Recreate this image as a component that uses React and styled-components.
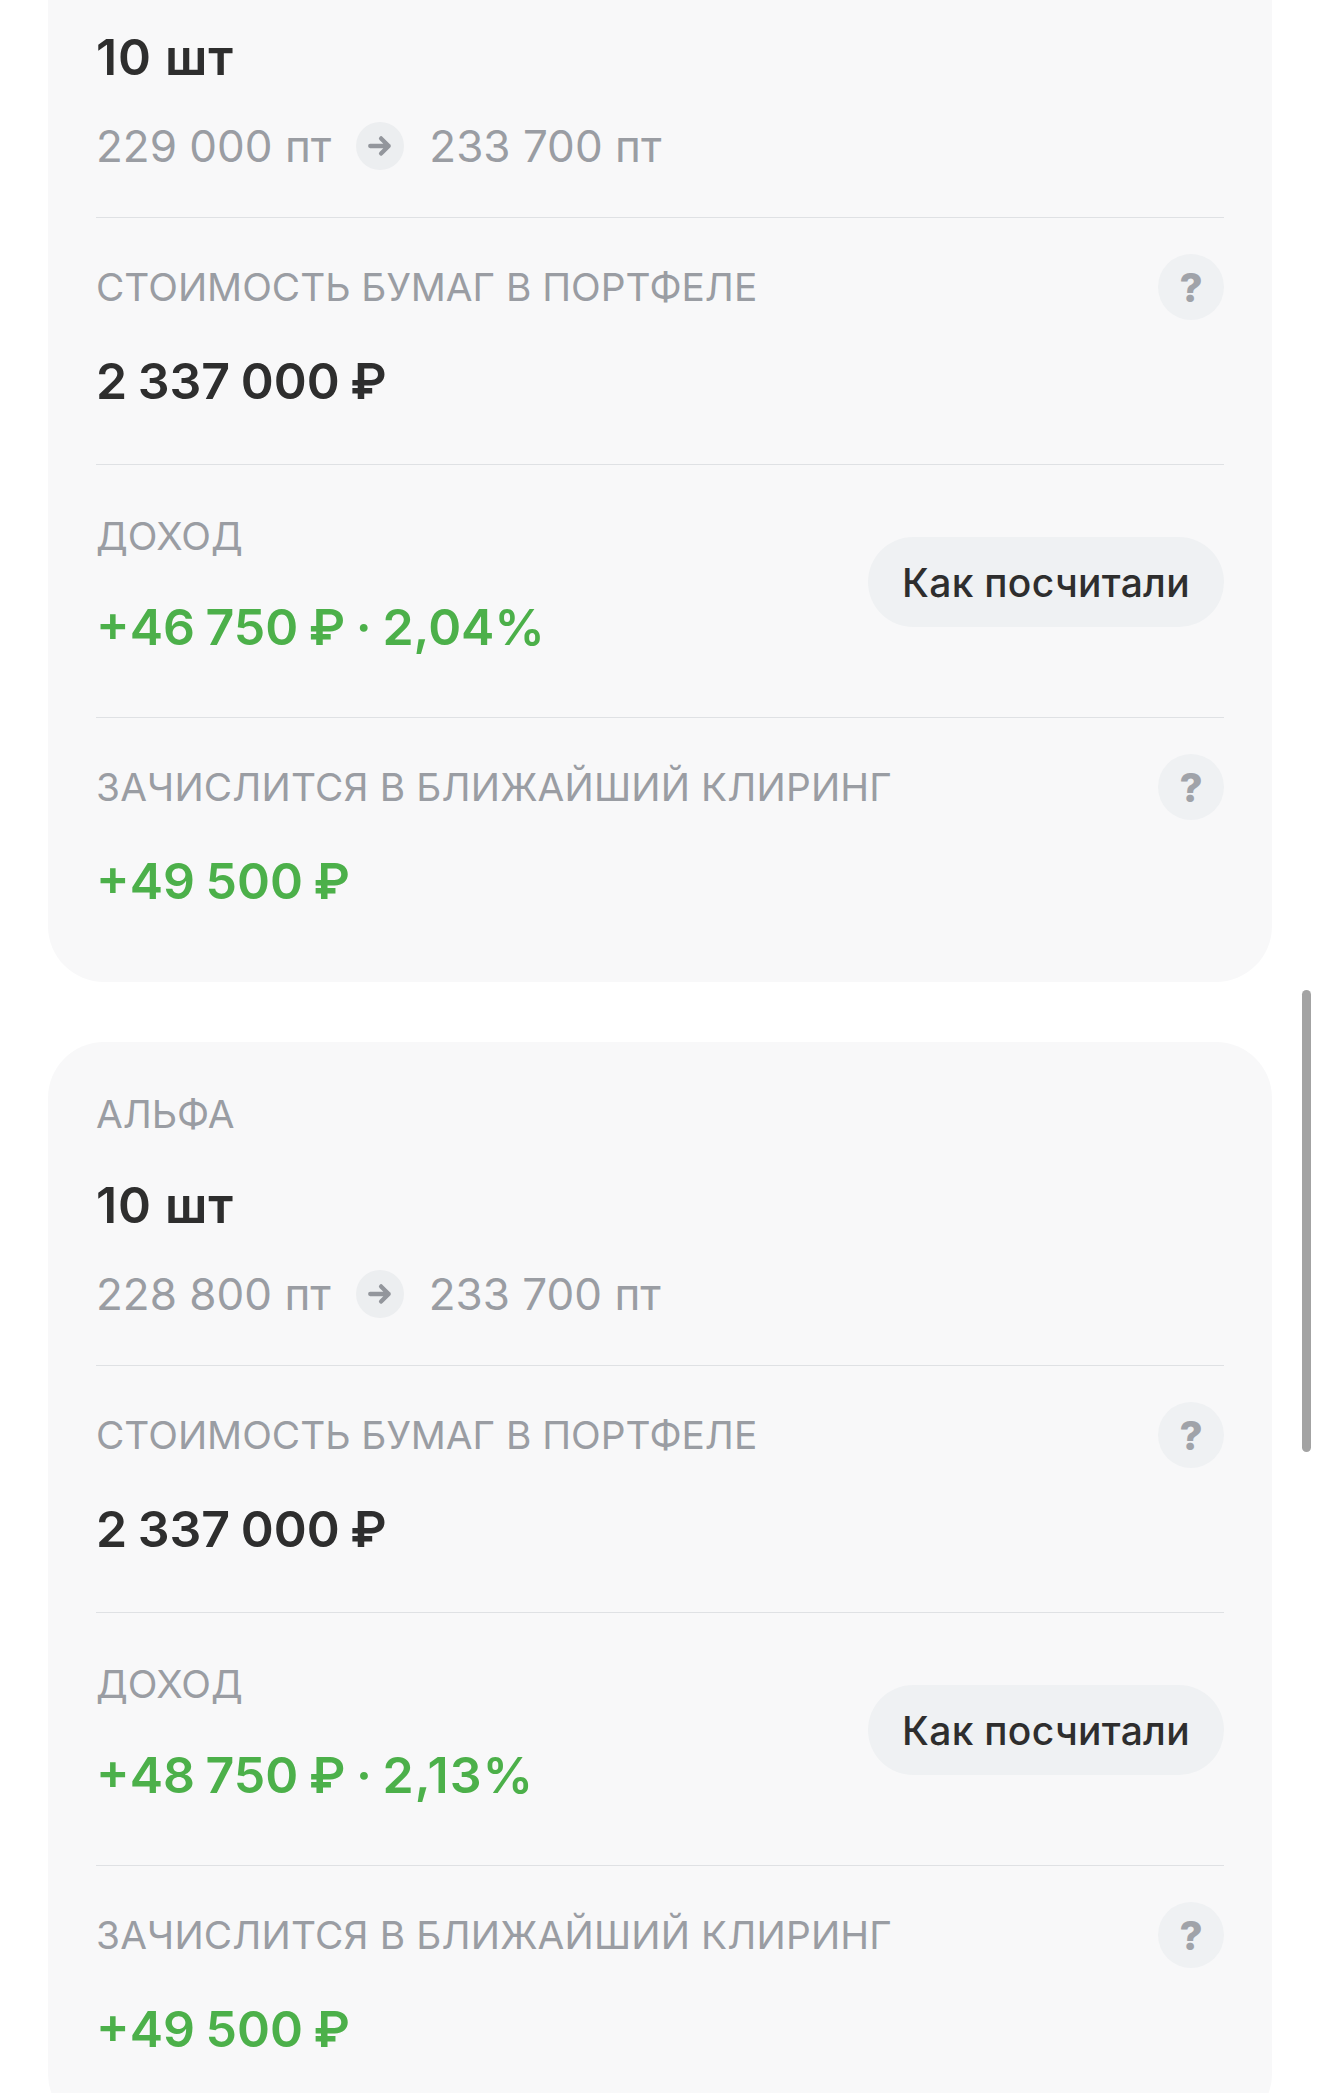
import React from "react";
import styled, { createGlobalStyle } from "styled-components";

const GlobalStyle = createGlobalStyle`
  html, body {
    margin: 0;
    height: 2093px;
    overflow: hidden;
    background: #ffffff;
  }
  body {
    font-family: Inter, "Noto Sans", "Liberation Sans", sans-serif;
  }
`;

const Page = styled.div`
  position: relative;
  height: 2093px;
  overflow: hidden;
`;

const List = styled.div`
  display: flex;
  flex-direction: column;
  gap: 60px;
  margin-top: -106px;
  padding: 0 48px;
`;

const Card = styled.section`
  background: #f8f8f9;
  border-radius: 56px;
  padding: 0 48px;
`;

const Section = styled.div`
  padding: ${({ $top }) => $top}px 0 ${({ $bottom }) => $bottom}px;
  border-bottom: ${({ $last }) => ($last ? "none" : "1px solid #dfe1e4")};
`;

const Eyebrow = styled.div`
  font-size: 38.8px;
  line-height: 48px;
  font-weight: 400;
  color: #9a9da3;
`;

const Count = styled.div`
  margin-top: 37px;
  font-size: 50px;
  line-height: 60px;
  font-weight: 600;
  letter-spacing: 0.8px;
  color: #2e2e2e;
`;

const PriceRow = styled.div`
  display: flex;
  align-items: center;
  gap: 25px;
  margin-top: 35px;
  height: 48px;
  font-size: 44px;
  line-height: 48px;
  font-weight: 400;
  color: #9a9da3;
`;

const ArrowBadge = styled.span`
  display: flex;
  align-items: center;
  justify-content: center;
  width: 48px;
  height: 48px;
  border-radius: 50%;
  background: #eceef0;
`;

const Header = styled.div`
  display: flex;
  align-items: center;
  justify-content: space-between;
  height: 66px;
`;

const Label = styled.div`
  font-size: 38.8px;
  line-height: 48px;
  font-weight: 400;
  letter-spacing: ${({ $tracking }) => $tracking || 0}px;
  color: #9a9da3;
`;

const HelpButton = styled.span`
  display: flex;
  align-items: center;
  justify-content: center;
  width: 66px;
  height: 66px;
  border-radius: 50%;
  background: #eff1f3;
  font-size: 40px;
  font-weight: 800;
  color: #a0a3a9;
`;

const Value = styled.div`
  margin-top: ${({ $gap }) => $gap}px;
  font-size: 50px;
  line-height: 60px;
  font-weight: 600;
  word-spacing: -2px;
  color: ${({ $positive }) => ($positive ? "#4cb04a" : "#2e2e2e")};
`;

const Percent = styled.span`
  letter-spacing: ${({ $tracking }) => $tracking || 0}px;
`;

const IncomeRow = styled.div`
  display: flex;
  align-items: flex-start;
  justify-content: space-between;
  min-height: 158px;
`;

const CalcButton = styled.button`
  align-self: center;
  height: 90px;
  padding: 0 34px;
  border: none;
  border-radius: 45px;
  background: #eff1f3;
  font-family: inherit;
  font-size: 39px;
  font-weight: 500;
  letter-spacing: 0.3px;
  color: #2e2e2e;
`;

const Scrollbar = styled.div`
  position: absolute;
  top: 990px;
  left: 1302px;
  width: 9px;
  height: 462px;
  border-radius: 5px;
  background: #a3a3a3;
`;

const cards = [
  {
    id: 1,
    from: "229 000 пт",
    income: "+46 750 ₽ · ",
    percent: "2,04%",
  },
  {
    id: 2,
    name: "АЛЬФА",
    from: "228 800 пт",
    income: "+48 750 ₽ · ",
    percent: "2,13%",
    percentTracking: 1.2,
  },
];

const ArrowIcon = () => (
  <svg width="26" height="26" viewBox="0 0 24 24" fill="none">
    <path
      d="M3 12h17M13 5l7 7-7 7"
      stroke="#93969c"
      strokeWidth="4"
      strokeLinecap="round"
      strokeLinejoin="round"
    />
  </svg>
);

const App = () => {
  return (
    <Page>
      <GlobalStyle />
      <List>
        {cards.map((card) => (
          <Card key={card.id}>
            {/* the first card starts above the fold, its name is scrolled away */}
            <Section $top={card.name ? 48 : 96} $bottom={47}>
              {card.name && <Eyebrow>{card.name}</Eyebrow>}
              <Count>10 шт</Count>
              <PriceRow>
                <span>{card.from}</span>
                <ArrowBadge>
                  <ArrowIcon />
                </ArrowBadge>
                <span>233 700 пт</span>
              </PriceRow>
            </Section>

            <Section $top={36} $bottom={53}>
              <Header>
                <Label>СТОИМОСТЬ БУМАГ В ПОРТФЕЛЕ</Label>
                <HelpButton>?</HelpButton>
              </Header>
              <Value $gap={31}>2 337 000 ₽</Value>
            </Section>

            <Section $top={38} $bottom={56}>
              <IncomeRow>
                <div>
                  <Header>
                    <Label>ДОХОД</Label>
                  </Header>
                  <Value $gap={28} $positive>
                    {card.income}
                    <Percent $tracking={card.percentTracking}>{card.percent}</Percent>
                  </Value>
                </div>
                <CalcButton>Как посчитали</CalcButton>
              </IncomeRow>
            </Section>

            <Section $top={36} $bottom={71} $last>
              <Header>
                <Label $tracking={0.17}>ЗАЧИСЛИТСЯ В БЛИЖАЙШИЙ КЛИРИНГ</Label>
                <HelpButton>?</HelpButton>
              </Header>
              <Value $gap={31} $positive>
                +49 500 ₽
              </Value>
            </Section>
          </Card>
        ))}
      </List>
      <Scrollbar />
    </Page>
  );
};

export default App;
